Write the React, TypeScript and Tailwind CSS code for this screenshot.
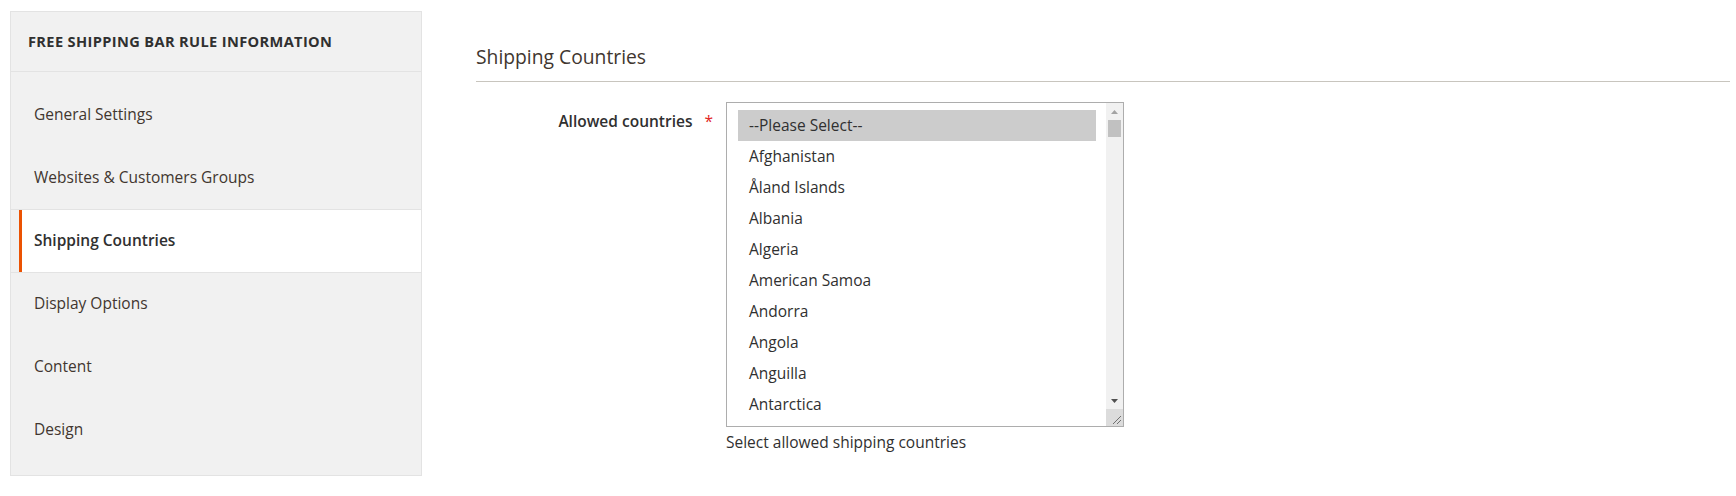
import React from "react";

const items = [
  "General Settings",
  "Websites & Customers Groups",
  "Shipping Countries",
  "Display Options",
  "Content",
  "Design",
];

const countries = [
  "--Please Select--",
  "Afghanistan",
  "Åland Islands",
  "Albania",
  "Algeria",
  "American Samoa",
  "Andorra",
  "Angola",
  "Anguilla",
  "Antarctica",
];

export default function App() {
  const activeIndex = 2;
  return (
    <div
      className="w-[1736px] h-[496px] bg-white flex items-start overflow-hidden"
      style={{ fontFamily: '"Open Sans", "Noto Sans", sans-serif' }}
    >
      {/* Sidebar */}
      <div className="ml-[10px] mt-[11px] w-[412px] border border-[#e3e3e3] bg-[#f1f1f1]">
        <div className="h-[60px] border-b border-[#e3e3e3] flex items-center pl-[17px]">
          <span className="text-[14.6px] font-bold uppercase tracking-[0.025em] text-[#303030] leading-none">
            Free Shipping Bar Rule Information
          </span>
        </div>
        <div className="pt-[12px] pb-[13px]">
          {items.map((label, i) => {
            const active = i === activeIndex;
            const lineBelow = i === activeIndex || i === activeIndex - 1;
            return (
              <div
                key={label}
                className={`h-[63px] border-b ${
                  lineBelow ? "border-[#e3e3e3]" : "border-transparent"
                }`}
              >
                <div
                  className={`ml-[8px] h-full flex items-center pl-[12px] border-l-[3px] ${
                    active
                      ? "bg-white border-[#eb5202] text-[#303030] font-semibold"
                      : "border-transparent text-[#41362f]"
                  } text-[15.5px]`}
                >
                  {label}
                </div>
              </div>
            );
          })}
        </div>
      </div>

      {/* Main content */}
      <div className="flex-1 ml-[54px] mr-[6px]">
        <div className="pt-[44px] pb-[11px] border-b border-[#c8c5be]">
          <div className="text-[19.3px] leading-[26px] font-normal text-[#41362f]">
            Shipping Countries
          </div>
        </div>

        <div className="mt-[20px] flex items-start">
          <div className="w-[250px] pt-[8px] pr-[13px] flex justify-end items-center">
            <span className="text-[15.5px] leading-[22px] font-semibold text-[#303030]">
              Allowed countries
            </span>
            <span className="ml-[12px] text-[15.5px] leading-[22px] text-[#e22626]">*</span>
          </div>

          <div>
            <div className="w-[398px] h-[325px] border border-[#adadad] bg-white flex">
              <div className="flex-1 pt-[7px] pl-[11px] pr-[10px] overflow-hidden">
                {countries.map((c, i) => (
                  <div
                    key={c}
                    className={`h-[31px] flex items-center pl-[11px] text-[15.5px] text-[#303030] whitespace-nowrap ${
                      i === 0 ? "bg-[#cccccc]" : ""
                    }`}
                  >
                    {c}
                  </div>
                ))}
              </div>
              {/* scrollbar */}
              <div className="w-[17px] flex flex-col">
                <div className="flex-1 bg-[#f1f1f1] relative">
                  <svg
                    className="absolute left-[5px] top-[7px]"
                    width="7"
                    height="4"
                    viewBox="0 0 7 4"
                  >
                    <polygon points="3.5,0 7,4 0,4" fill="#a3a3a3" />
                  </svg>
                  <div className="absolute left-[2px] top-[17px] w-[13px] h-[17px] bg-[#c1c1c1]" />
                  <svg
                    className="absolute left-[5px] bottom-[6px]"
                    width="7"
                    height="4"
                    viewBox="0 0 7 4"
                  >
                    <polygon points="0,0 7,0 3.5,4" fill="#505050" />
                  </svg>
                </div>
                <div className="h-[17px] bg-[#dcdcdc] relative">
                  <svg
                    className="absolute right-[1px] bottom-[1px]"
                    width="12"
                    height="12"
                    viewBox="0 0 12 12"
                  >
                    <line x1="3" y1="11" x2="11" y2="3" stroke="#707070" strokeWidth="1" />
                    <line x1="7" y1="11" x2="11" y2="7" stroke="#707070" strokeWidth="1" />
                  </svg>
                </div>
              </div>
            </div>
            <div className="mt-[4px] text-[15.5px] leading-[22px] text-[#303030]">
              Select allowed shipping countries
            </div>
          </div>
        </div>
      </div>
    </div>
  );
}
